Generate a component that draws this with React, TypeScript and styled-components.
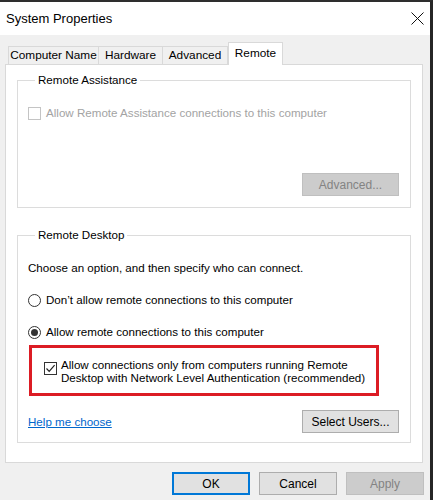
import styled, { createGlobalStyle } from "styled-components";

const GlobalStyle = createGlobalStyle`
    html, body {
        margin: 0;
        padding: 0;
        background: #f0f0f0;
    }
    body {
        font-family: "Liberation Sans", Arial, sans-serif;
        font-size: 11.6px;
        color: #000;
    }
`;

const Window = styled.div`
    width: 433px;
    height: 500px;
    box-sizing: border-box;
    border-top: 2px solid #2e2e2e;
    border-right: 3px solid #262626;
    background: #f0f0f0;
    overflow: hidden;
    display: flex;
    flex-direction: column;
`;

const TitleBar = styled.header`
    height: 33px;
    flex-shrink: 0;
    background: #fff;
    display: flex;
    align-items: center;
    justify-content: space-between;
    padding: 0 6px 0 6px;
    font-size: 13px;
`;

const CloseButton = styled.button`
    border: none;
    background: transparent;
    padding: 0;
    width: 14px;
    height: 14px;
    display: flex;
    align-items: center;
    justify-content: center;
`;

const Body = styled.div`
    padding: 7px 7px 0 5px;
    display: flex;
    flex-direction: column;
`;

const TabStrip = styled.nav`
    display: flex;
    align-items: flex-end;
    height: 22px;
    padding-left: 3px;
`;

const Tab = styled.div<{ $active?: boolean; $first?: boolean; $width: number }>`
    box-sizing: border-box;
    width: ${p => p.$width}px;
    height: ${p => (p.$active ? "23px" : "18px")};
    margin-bottom: ${p => (p.$active ? "-1px" : "0")};
    border: 1px solid #d9d9d9;
    border-bottom: none;
    border-left-width: ${p => (p.$first || p.$active ? "1px" : "0")};
    background: ${p => (p.$active ? "#fff" : "#f0f0f0")};
    position: relative;
    z-index: ${p => (p.$active ? 1 : 0)};
    display: flex;
    align-items: center;
    justify-content: center;
    font-size: 11.8px;
    line-height: 1;
    white-space: nowrap;
`;

const Panel = styled.section`
    box-sizing: border-box;
    width: 418px;
    border: 1px solid #d9d9d9;
    background: #fff;
    padding: 7px 11px 19px 11px;
    display: flex;
    flex-direction: column;
    gap: 19px;
`;

const GroupBox = styled.fieldset`
    margin: 0;
    min-width: 0;
    border: 1px solid #dcdcdc;
    padding: 0 11px 9px 10px;
    display: flex;
    flex-direction: column;
`;

const Legend = styled.legend`
    padding: 0 3px;
    margin-left: 7px;
    line-height: 16px;
`;

const Row = styled.label<{ $top: number; $disabled?: boolean }>`
    display: flex;
    align-items: center;
    gap: 5px;
    line-height: 16px;
    margin-top: ${p => p.$top}px;
    color: ${p => (p.$disabled ? "#a3a3a3" : "#000")};
`;

const Text = styled.p<{ $top: number }>`
    margin: ${p => p.$top}px 0 0;
    line-height: 16px;
`;

const Box = styled.span<{ $disabled?: boolean }>`
    box-sizing: border-box;
    width: 13px;
    height: 13px;
    flex-shrink: 0;
    border: 1px solid ${p => (p.$disabled ? "#c4c4c4" : "#333")};
    background: #fff;
    display: flex;
    align-items: center;
    justify-content: center;
`;

const Radio = styled.span<{ $checked?: boolean }>`
    box-sizing: border-box;
    width: 13px;
    height: 13px;
    flex-shrink: 0;
    border-radius: 50%;
    border: 1px solid #333;
    background: #fff;
    display: flex;
    align-items: center;
    justify-content: center;

    &::after {
        content: '';
        width: 7px;
        height: 7px;
        border-radius: 50%;
        background: #333;
        display: ${p => (p.$checked ? "block" : "none")};
    }
`;

const Highlight = styled.div`
    box-sizing: border-box;
    width: 350px;
    margin: 5px 0 0 1px;
    border: 3px solid #dc1c24;
    padding: 10px 0 9px 12px;
    display: flex;
    align-items: flex-start;
    gap: 4px;
    line-height: 13px;
    white-space: nowrap;

    ${Box} {
        margin-top: 4px;
    }
`;

const ActionRow = styled.div<{ $top: number; $bottom?: number }>`
    display: flex;
    align-items: center;
    justify-content: space-between;
    margin-top: ${p => p.$top}px;
    margin-bottom: ${p => p.$bottom ?? 0}px;
`;

const HelpLink = styled.a`
    color: #0066cc;
    text-decoration: underline;
    line-height: 16px;
    cursor: pointer;
`;

const Button = styled.button<{ $width: number; $default?: boolean; $disabled?: boolean }>`
    box-sizing: border-box;
    width: ${p => p.$width}px;
    height: 23px;
    font-family: inherit;
    font-size: 12px;
    padding: 0;
    color: ${p => (p.$disabled ? "#838383" : "#000")};
    background: ${p => (p.$disabled ? "#cccccc" : "#e1e1e1")};
    border: ${p => (p.$default ? "2px solid #0078d7" : `1px solid ${p.$disabled ? "#bfbfbf" : "#adadad"}`)};
`;

const ButtonRow = styled.footer`
    display: flex;
    justify-content: flex-end;
    gap: 9px;
    margin: 9px -1px 0 0;
`;

const Check = () => (
    <svg width="11" height="11" viewBox="0 0 11 11">
        <path d="M1.5 5.5 L4.2 8.3 L9.6 2.2" fill="none" stroke="#222" strokeWidth="1.2" />
    </svg>
);

const tabs = [
    { title: "Computer Name", width: 91 },
    { title: "Hardware", width: 64 },
    { title: "Advanced", width: 65 },
    { title: "Remote", width: 55 },
];

export default function App() {
    return (
        <>
            <GlobalStyle />
            <Window>
                <TitleBar>
                    <span>System Properties</span>
                    <CloseButton aria-label="Close">
                        <svg width="13" height="13" viewBox="0 0 13 13">
                            <path d="M0.5 0.5 L12.5 12.5 M12.5 0.5 L0.5 12.5" stroke="#111" strokeWidth="1" />
                        </svg>
                    </CloseButton>
                </TitleBar>
                <Body>
                    <TabStrip>
                        {tabs.map((t, i) => (
                            <Tab key={t.title} $width={t.width} $first={i === 0} $active={t.title === "Remote"}>{t.title}</Tab>
                        ))}
                    </TabStrip>
                    <Panel>
                        <GroupBox>
                            <Legend>Remote Assistance</Legend>
                            <Row $top={17} $disabled>
                                <Box $disabled />
                                Allow Remote Assistance connections to this computer
                            </Row>
                            <ActionRow $top={52} $bottom={2}>
                                <span />
                                <Button $width={97} $disabled>Advanced...</Button>
                            </ActionRow>
                        </GroupBox>
                        <GroupBox>
                            <Legend>Remote Desktop</Legend>
                            <Text $top={17}>Choose an option, and then specify who can connect.</Text>
                            <Row $top={16}>
                                <Radio />
                                Don’t allow remote connections to this computer
                            </Row>
                            <Row $top={16}>
                                <Radio $checked />
                                Allow remote connections to this computer
                            </Row>
                            <Highlight>
                                <Box><Check /></Box>
                                <span>
                                    Allow connections only from computers running Remote
                                    <br />
                                    Desktop with Network Level Authentication (recommended)
                                </span>
                            </Highlight>
                            <ActionRow $top={14}>
                                <HelpLink>Help me choose</HelpLink>
                                <Button $width={97}>Select Users...</Button>
                            </ActionRow>
                        </GroupBox>
                    </Panel>
                    <ButtonRow>
                        <Button $width={78} $default>OK</Button>
                        <Button $width={78}>Cancel</Button>
                        <Button $width={78} $disabled>Apply</Button>
                    </ButtonRow>
                </Body>
            </Window>
        </>
    );
}
